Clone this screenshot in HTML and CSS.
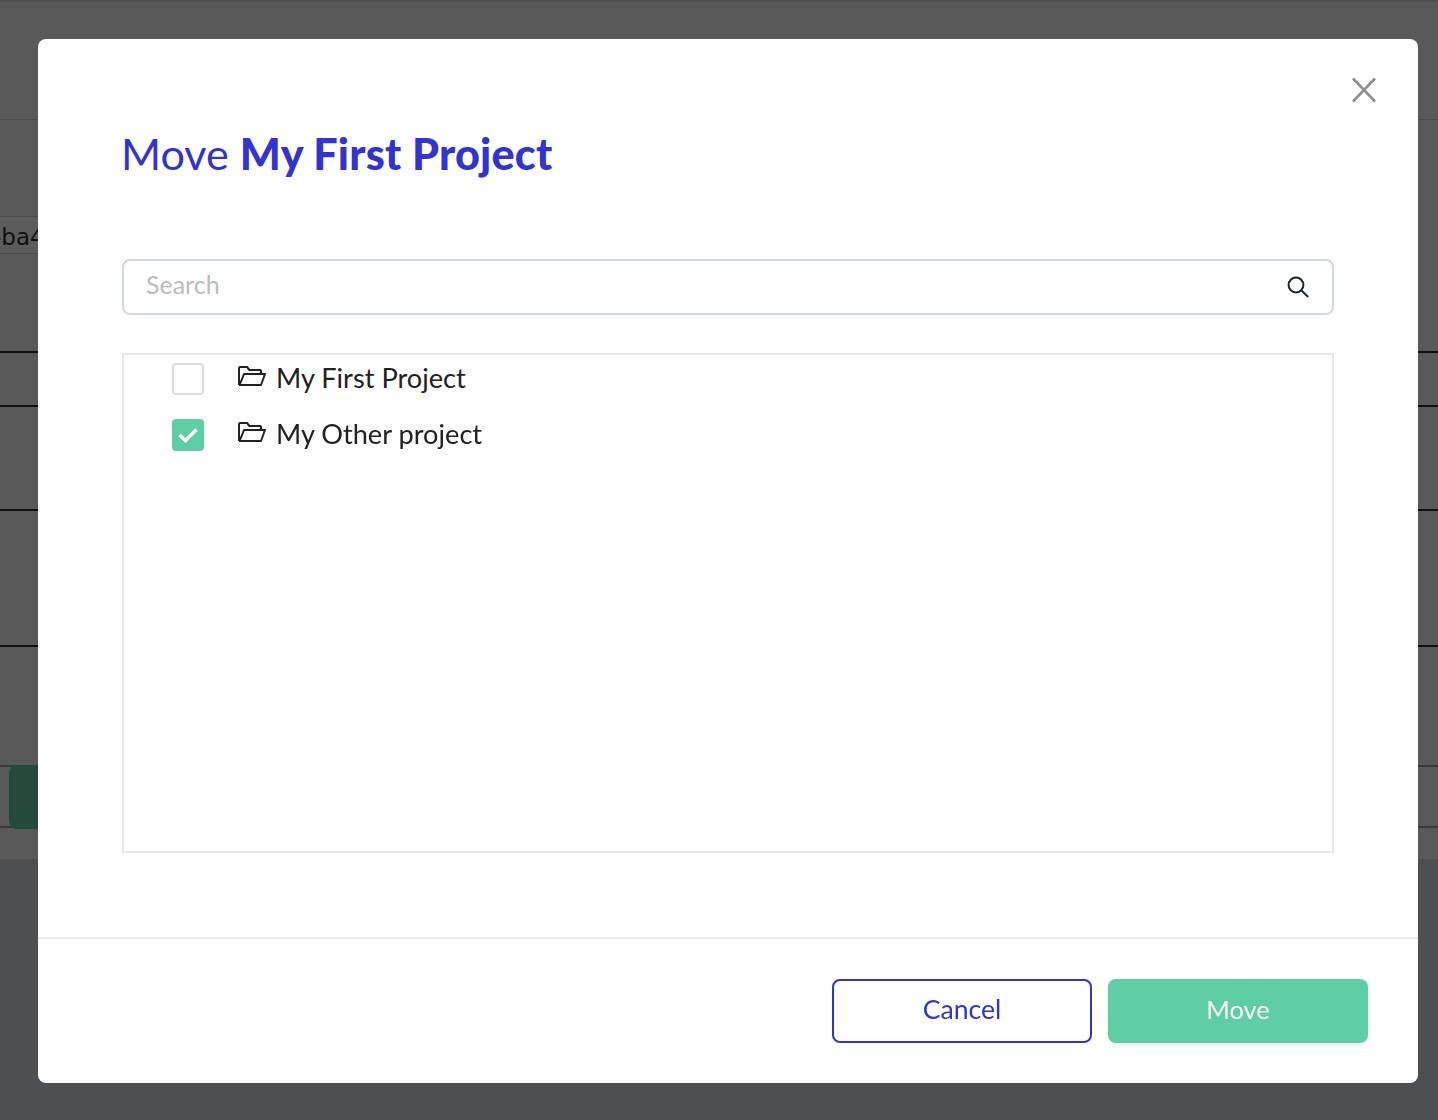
FILE: index.html
```html
<!DOCTYPE html>
<html lang="en">
<head>
<meta charset="utf-8">
<title>Move My First Project</title>
<link rel="stylesheet" href="styles.css">
</head>
<body>
<div class="page">
  <div class="page-top"></div>
  <div class="page-head"><span class="chip">-ba4</span></div>
  <div class="row row-a"></div>
  <div class="row row-b"></div>
  <div class="row row-c"></div>
  <div class="row row-d"></div>
  <div class="row-action"><span class="action"></span></div>
</div>
<div class="modal">
  <button class="close" aria-label="Close">
    <svg width="26" height="26" viewBox="0 0 26 26"><path d="M2 1.5 L24 24.5 M24 1.5 L2 24.5" fill="none" stroke="#8f8f8f" stroke-width="2.6"/></svg>
  </button>
  <div class="modal-body">
    <h1 class="title">Move <strong>My First Project</strong></h1>
    <div class="search">
      <span class="placeholder">Search</span>
      <svg class="search-icon" width="24" height="24" viewBox="0 0 24 24"><circle cx="10" cy="10" r="7.4" fill="none" stroke="#1c2733" stroke-width="2"/><path d="M15.2 15.2 L22.2 22" fill="none" stroke="#1c2733" stroke-width="2"/></svg>
    </div>
    <div class="list">
      <div class="item">
        <span class="check"></span>
        <svg class="folder" width="28" height="22" viewBox="0 0 28 22"><path d="M1 20 V3 Q1 2 2 2 H9 L11.5 5 H22 Q23 5 23 6 V9 M1 20 H23 L27 9 H6 L2 19" fill="none" stroke="#222" stroke-width="2" stroke-linejoin="round"/></svg>
        <span class="name">My First Project</span>
      </div>
      <div class="item">
        <span class="check checked"><svg width="22" height="18" viewBox="0 0 22 18"><path d="M2.5 9 L8.5 14.5 L19.5 3.5" fill="none" stroke="#fff" stroke-width="3.6"/></svg></span>
        <svg class="folder" width="28" height="22" viewBox="0 0 28 22"><path d="M1 20 V3 Q1 2 2 2 H9 L11.5 5 H22 Q23 5 23 6 V9 M1 20 H23 L27 9 H6 L2 19" fill="none" stroke="#222" stroke-width="2" stroke-linejoin="round"/></svg>
        <span class="name">My Other project</span>
      </div>
    </div>
  </div>
  <div class="modal-foot">
    <button class="btn btn-cancel">Cancel</button>
    <button class="btn btn-move">Move</button>
  </div>
</div>
</body>
</html>
```
FILE: styles.css
```css
* { box-sizing: border-box; }
html, body { margin: 0; height: 100%; }
body {
  background: #4e4f51;
  font-family: "Lato", "Open Sans", sans-serif;
  overflow: hidden;
}
.page { height: 859px; background: #595959; }
.page-top { height: 2px; background: #505050; }
.page-head {
  height: 349px;
  padding-top: 214px;
}
.page-head::before {
  content: "";
  display: block;
  height: 1px;
  margin-top: -97px;
  margin-bottom: 96px;
  background: #4a4a50;
}
.chip {
  display: block;
  width: 60px;
  height: 38px;
  overflow: hidden;
  border: 1px solid #4b4b4b;
  border-left: 0;
  background: #5c5c5c;
  color: #111;
  font: 23px/40px "DejaVu Sans", sans-serif;
  text-indent: -7px;
}
.row { border-top: 2px solid #0e1216; }
.row-a { height: 54px; }
.row-b { height: 104px; }
.row-c { height: 136px; }
.row-d { height: 120px; }
.row-action {
  height: 63px;
  border-top: 2px solid #3a3a3a;
  border-bottom: 2px solid #3a3a3a;
  display: flex;
  align-items: center;
  padding-left: 9px;
}
.action {
  width: 60px;
  height: 64px;
  flex: none;
  border-radius: 8px;
  background: #244a3c;
}
.modal {
  position: fixed;
  left: 38px;
  top: 39px;
  width: 1380px;
  height: 1044px;
  background: #fff;
  border-radius: 8px;
  display: flex;
  flex-direction: column;
}
.close {
  position: absolute;
  left: 1313px;
  top: 38px;
  width: 26px;
  height: 26px;
  padding: 0;
  border: 0;
  background: none;
  line-height: 0;
}
.modal-body { flex: 1; padding: 90px 84px 0; }
.title {
  margin: -2px 0 0 -1px;
  height: 132px;
  font-size: 43.2px;
  line-height: 52px;
  font-weight: 400;
  color: #3333d1;
}
.title strong { font-weight: 900; letter-spacing: 0.2px; }
.search {
  height: 56px;
  border: 2px solid #d0d9e2;
  border-radius: 8px;
  display: flex;
  align-items: center;
  justify-content: space-between;
  padding: 0 22px;
}
.placeholder { font-size: 25px; line-height: 30px; color: #bdbdbd; margin-top: -7px; }
.list {
  margin-top: 38px;
  height: 500px;
  border: 2px solid #e8e8e8;
  padding-left: 48px;
}
.item {
  display: flex;
  align-items: center;
  height: 56px;
  padding: 8px 0 16px;
}
.check {
  width: 32px;
  height: 32px;
  flex: none;
  border: 2px solid #dcdcdc;
  border-radius: 4px;
  margin-right: 34px;
  display: flex;
  align-items: center;
  justify-content: center;
}
.check.checked { border: 0; background: #5fcda6; }
.folder { flex: none; margin-right: 10px; margin-top: -6px; }
.name { font-size: 27.2px; line-height: 32px; color: #222; margin-top: -3px; }
.modal-foot {
  height: 146px;
  border-top: 2px solid #eeeeee;
  display: flex;
  justify-content: flex-end;
  gap: 16px;
  padding: 40px 50px 0 0;
}
.btn {
  width: 260px;
  height: 64px;
  border-radius: 8px;
  font-family: inherit;
  padding: 0 0 4px;
}
.btn-cancel { border: 2px solid #3333d1; background: #fff; color: #3333d1; font-size: 26.6px; }
.btn-move { border: 0; background: #5fcda6; color: #fff; font-size: 25.4px; box-shadow: 0 3px 4px #eee; }
```
